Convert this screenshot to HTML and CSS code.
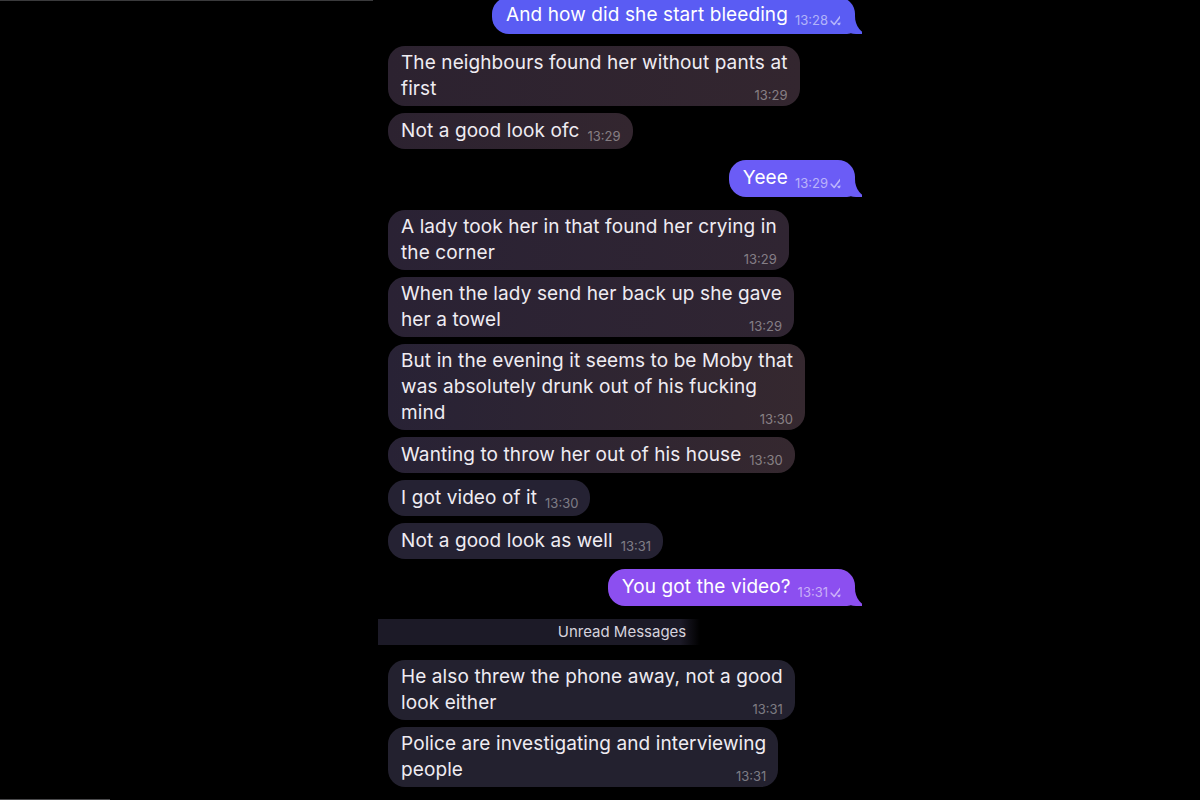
FILE: index.html
```html
<!DOCTYPE html>
<html lang="en">
<head>
<meta charset="utf-8">
<title>Chat</title>
<link rel="stylesheet" href="styles.css">
</head>
<body>
<div class="page">
  <div class="rule rule-top"></div>
  <div class="chat">
    <div class="row out first">
      <div class="bubble out-blue">And how did she start bleeding<span class="meta">13:28<svg class="check" viewBox="0 0 18 12" width="18" height="12"><path d="M1.2 7.2l3 3.3L11 1.5M8.2 9.6l.9.9L16.2 1.5" fill="none" stroke="currentColor" stroke-width="1.6" stroke-linecap="round" stroke-linejoin="round"/></svg></span></div>
    </div>

    <div class="row in gap-a">
      <div class="bubble multi c1">The neighbours found her without pants at<br>first<span class="meta block">13:29</span></div>
    </div>
    <div class="row in">
      <div class="bubble c1">Not a good look ofc<span class="meta">13:29</span></div>
    </div>

    <div class="row out gap-l">
      <div class="bubble out-indigo">Yeee<span class="meta">13:29<svg class="check" viewBox="0 0 18 12" width="18" height="12"><path d="M1.2 7.2l3 3.3L11 1.5M8.2 9.6l.9.9L16.2 1.5" fill="none" stroke="currentColor" stroke-width="1.6" stroke-linecap="round" stroke-linejoin="round"/></svg></span></div>
    </div>

    <div class="row in gap-xl">
      <div class="bubble multi c2">A lady took her in that found her crying in<br>the corner<span class="meta block">13:29</span></div>
    </div>
    <div class="row in">
      <div class="bubble multi c2">When the lady send her back up she gave<br>her a towel<span class="meta block">13:29</span></div>
    </div>
    <div class="row in">
      <div class="bubble multi c3">But in the evening it seems to be Moby that<br>was absolutely drunk out of his fucking<br>mind<span class="meta block">13:30</span></div>
    </div>
    <div class="row in">
      <div class="bubble c3">Wanting to throw her out of his house<span class="meta">13:30</span></div>
    </div>
    <div class="row in">
      <div class="bubble c4">I got video of it<span class="meta">13:30</span></div>
    </div>
    <div class="row in">
      <div class="bubble c4">Not a good look as well<span class="meta">13:31</span></div>
    </div>

    <div class="row out gap-m">
      <div class="bubble out-purple">You got the video?<span class="meta">13:31<svg class="check" viewBox="0 0 18 12" width="18" height="12"><path d="M1.2 7.2l3 3.3L11 1.5M8.2 9.6l.9.9L16.2 1.5" fill="none" stroke="currentColor" stroke-width="1.6" stroke-linecap="round" stroke-linejoin="round"/></svg></span></div>
    </div>

    <div class="unread">Unread Messages</div>

    <div class="row in">
      <div class="bubble multi c5">He also threw the phone away, not a good<br>look either<span class="meta block">13:31</span></div>
    </div>
    <div class="row in">
      <div class="bubble multi c5">Police are investigating and interviewing<br>people<span class="meta block">13:31</span></div>
    </div>
  </div>
  <div class="rule rule-bottom"></div>
</div>
</body>
</html>
```

FILE: styles.css
```css
* { box-sizing: border-box; }

html, body {
  margin: 0;
  padding: 0;
  background: #000;
}

body {
  font-family: Inter, "Noto Sans", "Liberation Sans", sans-serif;
  color: #efecf2;
  width: 1200px;
  height: 800px;
  overflow: hidden;
}

.page {
  height: 800px;
  display: flex;
  flex-direction: column;
  overflow: hidden;
}

.rule {
  flex: none;
  height: 1px;
}
.rule-top { width: 373px; background: #3a3a3c; }
.rule-bottom { width: 110px; background: #4a4a4c; margin-top: auto; }

.chat {
  flex: none;
  width: 467px;
  height: 798px;
  margin-left: 388px;
  display: flex;
  flex-direction: column;
  gap: 7px;
}

.row { display: flex; flex: none; }
.row.in { justify-content: flex-start; }
.row.out { justify-content: flex-end; }
.row.first { margin-top: -4px; }
.row.gap-a { margin-top: 5px; }
.row.gap-l { margin-top: 4px; }
.row.gap-m { margin-top: 3px; }
.row.gap-xl { margin-top: 6px; }

.bubble {
  position: relative;
  font-size: 19px;
  line-height: 26px;
  letter-spacing: 0.1px;
  padding: 5px 12px 5px 13px;
  border-radius: 17px;
  white-space: nowrap;
}

.bubble.multi { padding-top: 4px; padding-bottom: 4px; }

.meta {
  display: inline-block;
  margin-left: 8px;
  font-size: 13px;
  letter-spacing: 0;
  color: rgba(255, 255, 255, 0.42);
  vertical-align: -4px;
  line-height: 10px;
}

.meta.block {
  display: block;
  text-align: right;
  line-height: 16px;
  margin-top: -15px;
  margin-bottom: -1px;
  vertical-align: baseline;
}

.check {
  margin-left: 2px;
  vertical-align: -1px;
}

/* incoming colours */
.c1 { background: linear-gradient(90deg, #2c2230 0%, #33262f 100%); }
.c2 { background: linear-gradient(90deg, #2a2234 0%, #302532 100%); }
.c3 { background: linear-gradient(90deg, #282235 0%, #35282f 100%); }
.c4 { background: #252233; }
.c5 { background: #23212f; }

/* outgoing */
.bubble.out-blue,
.bubble.out-indigo,
.bubble.out-purple {
  color: #fff;
  padding: 5px 7px 6px 14px;
  border-bottom-right-radius: 8px;
}
.out-blue { background: #5a5cf3; }
.out-indigo { background: #6b5cf6; }
.out-purple { background: #8c4ff0; }

.out-blue .meta,
.out-indigo .meta,
.out-purple .meta {
  color: rgba(255, 255, 255, 0.55);
  margin-left: 7px;
}

.out-blue::before,
.out-indigo::before,
.out-purple::before {
  content: "";
  position: absolute;
  right: -7px;
  bottom: 0;
  width: 22px;
  height: 20px;
  background: inherit;
  border-bottom-left-radius: 16px 14px;
}
.out-blue::after,
.out-indigo::after,
.out-purple::after {
  content: "";
  position: absolute;
  right: -20px;
  bottom: 0;
  width: 20px;
  height: 22px;
  background: #000;
  border-bottom-left-radius: 14px 18px;
}

.unread {
  flex: none;
  margin: 6px -11px 8px -10px;
  height: 26px;
  line-height: 26px;
  text-align: center;
  font-size: 15px;
  color: #d6d3de;
  background: linear-gradient(90deg, #1c1a27 0%, #1c1a27 62%, rgba(28, 26, 39, 0) 66%);
}
```
